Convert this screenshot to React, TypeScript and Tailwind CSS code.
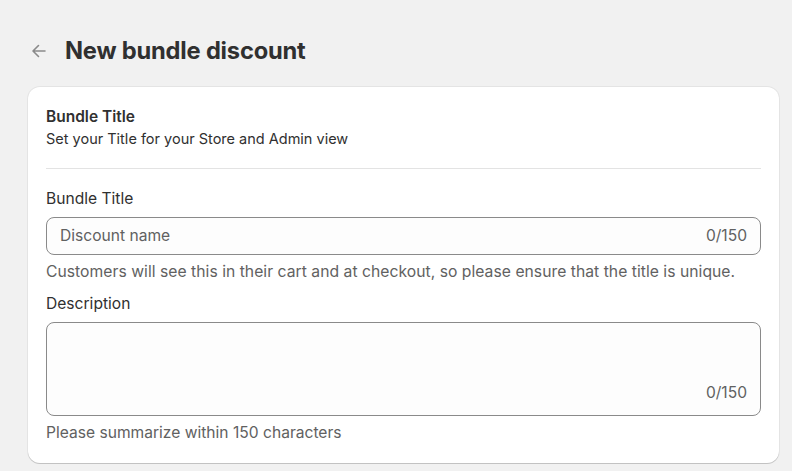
import React from "react";

export default function App() {
  return (
    <div
      className="min-h-[471px] w-[792px] bg-[#f1f1f1] text-[#303030]"
      style={{ fontFamily: "Inter, 'Noto Sans', sans-serif" }}
    >
      <div className="flex items-start pl-[29px] pt-[36px] h-[87px]">
        <div className="flex items-center h-[30px] gap-[16px]">
          <svg width="20" height="20" viewBox="0 0 20 20" fill="none" className="text-[#8a8a8a]">
            <path d="M16 10H4.5M9.5 4.5L4 10l5.5 5.5" stroke="currentColor" strokeWidth="1.6" strokeLinecap="round" strokeLinejoin="round" />
          </svg>
          <h1 className="text-[23.7px] font-bold leading-[30px] tracking-[-0.2px] text-[#303030]">New bundle discount</h1>
        </div>
      </div>
      <div className="mx-[28px] w-[751px] rounded-[12px] bg-white shadow-[0_1px_0_rgba(0,0,0,0.15),0_0_0_1px_rgba(0,0,0,0.05)] px-[18px] pt-[20px] pb-[20px]">
        <div className="text-[15.5px] font-semibold leading-[20px]">Bundle Title</div>
        <div className="text-[14.5px] leading-[20px] mt-[2px]">Set your Title for your Store and Admin view</div>
        <div className="h-px bg-[#e3e3e3] mt-[19px]" />
        <div className="text-[15.6px] leading-[20px] mt-[20px]">Bundle Title</div>
        <div className="mt-[8px] flex items-center h-[38px] rounded-[8px] border border-[#8a8a8a] bg-[#fdfdfd] px-[13px] text-[15.6px]">
          <span className="flex-1 text-[#616161]">Discount name</span>
          <span className="text-[#616161]">0/150</span>
        </div>
        <div className="text-[15.7px] leading-[20px] mt-[7px] text-[#616161] whitespace-nowrap tracking-[0.03px]">
          Customers will see this in their cart and at checkout, so please ensure that the title is unique.
        </div>
        <div className="text-[15.6px] leading-[20px] mt-[12px]">Description</div>
        <div className="mt-[8px] flex items-end h-[94px] rounded-[8px] border border-[#8a8a8a] bg-[#fdfdfd] px-[13px] pb-[11px] text-[15.6px]">
          <span className="flex-1" />
          <span className="text-[#616161]">0/150</span>
        </div>
        <div className="text-[15.6px] leading-[20px] mt-[7px] text-[#616161]">Please summarize within 150 characters</div>
      </div>
    </div>
  );
}
